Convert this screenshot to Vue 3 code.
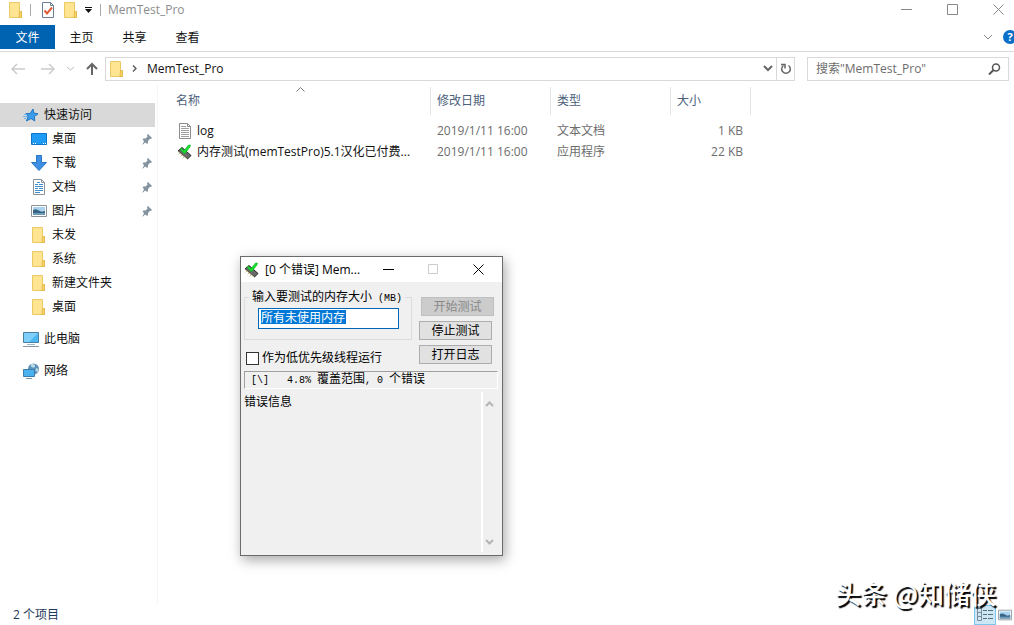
<script setup>
import { ref } from 'vue'

const search = ref('')
const memory = ref('所有未使用内存')
const lowPriority = ref(false)

const tabs = ['主页', '共享', '查看']
const places = [
  { name: '桌面', icon: 'desktop', pinned: true },
  { name: '下载', icon: 'download', pinned: true },
  { name: '文档', icon: 'document', pinned: true },
  { name: '图片', icon: 'picture', pinned: true },
  { name: '未发', icon: 'folder' },
  { name: '系统', icon: 'folder' },
  { name: '新建文件夹', icon: 'folder' },
  { name: '桌面', icon: 'folder' },
]
const files = [
  { name: 'log', icon: 'text', date: '2019/1/11 16:00', type: '文本文档', size: '1 KB' },
  { name: '内存测试(memTestPro)5.1汉化已付费...', icon: 'chip', date: '2019/1/11 16:00', type: '应用程序', size: '22 KB' },
]
</script>

<template>
  <div class="explorer">
    <svg class="defs" aria-hidden="true">
      <symbol id="folder" viewBox="0 0 16 16">
        <path d="M1.500.5h10v9l2 .5v5.500h-12z" fill="#ffe491" stroke="#ecc964" />
        <path d="M11.500 9.500h2v6h-2.500z" fill="#fbd566" stroke="#e2b84a" />
      </symbol>
      <symbol id="chip" viewBox="0 0 16 16">
        <path d="M1 7 5 3.500l9 8L10.500 15z" fill="#6a6a6a" stroke="#222" />
        <path d="M1 7.500l9 7.500M3 9l-1.500 1.500M5 11l-1.500 1.500M7 13l-1.500 1.500" stroke="#c9c29a" fill="none" />
        <path d="M4 4l3 2.500L11.500 1h2L13 3 8 9.500 6.500 9 3 5z" fill="#16e02e" stroke="#08a81a" stroke-width=".5" />
      </symbol>
      <symbol id="desktop" viewBox="0 0 16 16">
        <path d="M.5 2.500h15v11H.5z" fill="#1e9cf5" stroke="#0b74cc" />
        <path d="M2 12.500h1m1 0h1m7 0h1m1 0h1" stroke="#fff" />
      </symbol>
      <symbol id="download" viewBox="0 0 16 16">
        <path d="M5.500.5h5v7h5L8 15.500.5 7.500h5z" fill="#3c8fe2" stroke="#2876c6" />
      </symbol>
      <symbol id="document" viewBox="0 0 16 16">
        <path d="M2.500.5h8l3 3v12h-11z" fill="#fff" stroke="#8a9299" />
        <path d="M10.500.5v3h3" fill="none" stroke="#8a9299" />
        <path d="M6 3.500h3M4 5.500h3m1 0h4M4 7.500h8M4 9.500h3m1 0h4M4 11.500h8M4 13.500h5" stroke="#3f8dcc" />
      </symbol>
      <symbol id="picture" viewBox="0 0 16 16">
        <path d="M.5 2.500h15v11H.5z" fill="#fff" stroke="#8b9399" />
        <path d="M2 4h12v4H2z" fill="#a9d3f1" />
        <path d="M2 7c3-2 5 0 7 1s3 0 5 0v4H2z" fill="#3a6685" />
        <path d="M2 10h12v2H2z" fill="#6c9cba" />
      </symbol>
      <symbol id="text" viewBox="0 0 16 16">
        <path d="M2.500.5h8l3 3v12h-11z" fill="#fff" stroke="#8d8d8d" />
        <path d="M10.500.5v3h3" fill="none" stroke="#8d8d8d" />
        <path d="M4 3.500h5M4 5.500h8M4 7.500h8M4 9.500h8M4 11.500h8M4 13.500h8" stroke="#a0a0a0" />
      </symbol>
      <symbol id="star" viewBox="0 0 16 16">
        <path d="M10 2l.8 4 4.200.8-3.500 2.700.2 4.500-3.700-2.500L3.500 14l1.500-4.500-2-3 4 .2z" fill="#3c9cec" stroke="#2278c4" />
        <path d="M1 7.500h3M0 9.500h4M1 11.500h2" stroke="#6db3ee" />
      </symbol>
      <symbol id="pin" viewBox="0 0 12 12">
        <path d="M7 1l4 4-1 1-1-.2L7 8v2L6 11 1.500 6.500l1-1h2l2-2L6 2zM3.500 7.500 5 9 1 12z" fill="#8393a0" />
      </symbol>
      <symbol id="pc" viewBox="0 0 16 16">
        <path d="M.5 1.500h15v10H.5z" fill="#4db7f2" stroke="#4b7f9f" />
        <path d="M1 2h14L6 11H1z" fill="#7ed0fa" />
        <path d="M4 13.500h8" stroke="#9fb6c4" />
        <path d="M0 15.500h16" stroke="#8796a2" />
      </symbol>
      <symbol id="network" viewBox="0 0 16 16">
        <circle cx="10.500" cy="6" r="5.500" fill="#5c92b9" />
        <path d="M8 1.500c2-1 5 0 4 2s-3 1-4 0zM13 5l2.500 1-1 3-2-1z" fill="#b9dbe9" />
        <path d="M.5 6.500h11v7H.5z" fill="#4ab1ef" stroke="#3b7ca8" />
        <path d="M3 15.500h6" stroke="#7b93a4" />
      </symbol>
    </svg>

    <header class="titlebar">
      <svg class="i16"><use href="#folder" /></svg>
      <span class="divider"></span>
      <button class="plain check" aria-label="属性">
        <svg width="14" height="16" viewBox="0 0 14 16" fill="none">
          <path d="M1.500.5h8l3 3v12h-11z" fill="#fff" stroke="#6b7e93" />
          <path d="M9.500.5v3h3" stroke="#6b7e93" />
          <path d="M3.500 8.500l2.500 3 5-6" stroke="#df5b38" stroke-width="2" />
        </svg>
      </button>
      <button class="plain" aria-label="新建文件夹"><svg class="i16"><use href="#folder" /></svg></button>
      <button class="plain more" aria-label="自定义快速访问工具栏">
        <svg width="7" height="6"><path d="M0 .5h7" stroke="#111" /><path d="M0 2h7L3.500 6z" fill="#111" /></svg>
      </button>
      <span class="divider last"></span>
      <h1>MemTest_Pro</h1>
      <div class="window-buttons">
        <button class="plain" aria-label="最小化"><svg width="11" height="11"><path d="M0 5.500h11" stroke="#888" /></svg></button>
        <button class="plain" aria-label="最大化"><svg width="11" height="11"><path d="M.5.5h10v10H.5z" fill="none" stroke="#888" /></svg></button>
        <button class="plain" aria-label="关闭"><svg width="11" height="11"><path d="M.5.500l10 10m0-10l-10 10" stroke="#888" /></svg></button>
      </div>
    </header>

    <nav class="ribbon">
      <button class="plain tab active">文件</button>
      <button v-for="tab in tabs" :key="tab" class="plain tab">{{ tab }}</button>
      <button class="plain expand" aria-label="展开功能区">
        <svg width="10" height="6" fill="none"><path d="M1 1l4 4 4-4" stroke="#888" /></svg>
      </button>
      <button class="plain help" aria-label="帮助">?</button>
    </nav>

    <div class="addressbar">
      <button class="plain" aria-label="后退"><svg width="14" height="12" fill="none" stroke="#ccc" stroke-width="1.500"><path d="M14 6H1m5-5L1 6l5 5" /></svg></button>
      <button class="plain forward" aria-label="前进"><svg width="14" height="12" fill="none" stroke="#ccc" stroke-width="1.500"><path d="M0 6h13M8 1l5 5-5 5" /></svg></button>
      <button class="plain recent" aria-label="最近位置"><svg width="7" height="5" fill="none"><path d="M0 1l3.500 3L7 1" stroke="#bbb" /></svg></button>
      <button class="plain up" aria-label="向上"><svg width="12" height="13" fill="none" stroke="#666" stroke-width="2"><path d="M6 13V2M1 7l5-5 5 5" /></svg></button>
      <div class="path">
        <svg class="i16"><use href="#folder" /></svg>
        <svg class="crumb" width="5" height="7" fill="none"><path d="M1 .5l3 3-3 3" stroke="#555" stroke-width="1.300" /></svg>
        <button class="plain">MemTest_Pro</button>
        <button class="plain history" aria-label="以前的位置"><svg width="10" height="7" fill="none"><path d="M1 1l4 4 4-4" stroke="#666" stroke-width="2" /></svg></button>
        <button class="plain refresh" aria-label="刷新">
          <svg width="12" height="12" fill="none" stroke="#666" stroke-width="1.500"><path d="M3.500 2.500a4.300 4.300 0 1 0 5 0" /><path d="M1 1.500h4v4" /></svg>
        </button>
      </div>
      <div class="search">
        <input v-model="search" type="search" aria-label="搜索" placeholder='搜索"MemTest_Pro"' />
        <svg width="13" height="12" fill="none" stroke="#555" stroke-width="1.500"><circle cx="8" cy="4.500" r="3.500" /><path d="M5.500 7L1 11.500" stroke-width="2" /></svg>
      </div>
    </div>

    <div class="content">
      <aside class="sidebar">
        <a href="#" class="place root selected"><svg class="i16"><use href="#star" /></svg>快速访问</a>
        <a v-for="(place, i) in places" :key="i" href="#" class="place">
          <svg class="i16"><use :href="'#' + place.icon" /></svg>{{ place.name }}
          <svg v-if="place.pinned" class="pin"><use href="#pin" /></svg>
        </a>
        <a href="#" class="place root spaced"><svg class="i16"><use href="#pc" /></svg>此电脑</a>
        <a href="#" class="place root spaced"><svg class="i16"><use href="#network" /></svg>网络</a>
      </aside>

      <main>
        <table>
          <thead>
            <tr>
              <th class="c-name">名称<svg class="sort" width="9" height="5" fill="none"><path d="M.5 4.500l4-4 4 4" stroke="#777" /></svg></th>
              <th class="c-date">修改日期</th>
              <th class="c-type">类型</th>
              <th class="c-size">大小</th>
            </tr>
          </thead>
          <tbody>
            <tr v-for="file in files" :key="file.icon">
              <td>
                <div class="file"><svg class="i16"><use :href="'#' + file.icon" /></svg>{{ file.name }}</div>
              </td>
              <td>{{ file.date }}</td>
              <td>{{ file.type }}</td>
              <td class="size">{{ file.size }}</td>
            </tr>
          </tbody>
        </table>
      </main>
    </div>

    <footer>
      <span>2 个项目</span>
      <button class="plain view on" aria-label="详细信息">
        <svg width="16" height="14" fill="none"><path d="M.5.5h4v12h-4zM.5 4.500h4M.5 8.500h4" stroke="#7d8c98" /><path d="M6 2.500h4m1 0h5M6 6.500h4m1 0h5M6 10.500h4m1 0h5" stroke="#5c6c78" /></svg>
      </button>
      <button class="plain view" aria-label="大图标"><svg width="14" height="14" viewBox="0 0 16 16"><use href="#picture" /></svg></button>
    </footer>

    <section class="dialog" role="dialog" aria-label="MemTest">
      <div class="dialog-title">
        <svg class="i16"><use href="#chip" /></svg>
        <h2>[0 个错误] Mem...</h2>
        <button class="plain" aria-label="最小化"><svg width="11" height="11"><path d="M0 5.500h11" stroke="#000" /></svg></button>
        <button class="plain" aria-label="最大化" disabled><svg width="11" height="11"><path d="M.5.5h9v9h-9z" fill="none" stroke="#ccc" /></svg></button>
        <button class="plain" aria-label="关闭"><svg width="11" height="11"><path d="M.5.500l10 10m0-10l-10 10" stroke="#000" /></svg></button>
      </div>
      <div class="dialog-body">
        <div class="form">
          <div class="options">
            <fieldset>
              <legend><label for="memory">输入要测试的内存大小<span class="mono"> (MB)</span></label></legend>
              <input id="memory" v-model="memory" type="text" />
            </fieldset>
            <label class="priority"><input v-model="lowPriority" type="checkbox" />作为低优先级线程运行</label>
          </div>
          <div class="actions">
            <button class="start" disabled>开始测试</button>
            <button>停止测试</button>
            <button>打开日志</button>
          </div>
        </div>
        <output class="status"><span class="mono">[\]&nbsp;&nbsp; 4.8% </span>覆盖范围<span class="mono">, 0 </span>个错误</output>
        <div class="log">
          <span>错误信息</span>
          <div class="scroll">
            <svg width="9" height="6" fill="none"><path d="M1 5l3.500-3.500L8 5" stroke="#b5b5b5" stroke-width="2" /></svg>
            <svg width="9" height="6" fill="none"><path d="M1 1l3.500 3.500L8 1" stroke="#b5b5b5" stroke-width="2" /></svg>
          </div>
        </div>
      </div>
    </section>

    <div class="signature">头条 @知储侠</div>
  </div>
</template>

<style>
body { margin: 0; background: #fff; }
</style>

<style scoped>
* { box-sizing: border-box; }
.explorer {
  position: relative;
  display: flex;
  flex-direction: column;
  height: 100vh;
  overflow: hidden;
  font: 12px/16px "Open Sans", "Noto Sans CJK SC", sans-serif;
  color: #111;
  background: #fff;
}
.defs { position: absolute; width: 0; height: 0; }
svg { display: block; flex: none; }
.i16 { width: 16px; height: 16px; }
.mono { font: 10px/12px "Liberation Mono", monospace; white-space: pre; }
.plain { padding: 0; border: 0; background: none; color: inherit; font: inherit; display: flex; align-items: center; justify-content: center; }
h1, h2 { margin: 0; font-size: 12px; font-weight: 400; }

.titlebar { display: flex; align-items: center; height: 19px; padding-left: 8px; }
.divider { width: 1px; height: 12px; margin: 0 8px 0 6px; background: #aaa; }
.divider.last { margin-left: 8px; margin-right: 7px; }
.check { margin: 0 8px 0 2px; }
.more { margin-left: 6px; }
h1 { color: #8c8c8c; }
.window-buttons { display: flex; margin-left: auto; }
.window-buttons button { width: 46px; height: 19px; }
.window-buttons button:last-child { width: 32px; margin-left: 7px; }

.ribbon { display: flex; height: 33px; padding-top: 6px; border-bottom: 1px solid #dadbdc; }
.tab { width: 53px; height: 24px; padding-top: 1px; }
.tab.active { width: 55px; background: #0063b1; color: #fff; }
.expand { margin-left: auto; width: 20px; height: 24px; }
.help { width: 14px; height: 14px; margin: 5px -3px 0 5px; border-radius: 50%; background: #0b6fc9; color: #fff; font-size: 11px; font-weight: 700; }

.addressbar { display: flex; align-items: center; height: 33px; padding: 0 5px 0 11px; }
.forward { margin-left: 16px; }
.recent { margin-left: 12px; }
.up { margin: 0 7px 0 12px; }
.path { flex: 1; display: flex; align-items: center; height: 24px; padding-left: 3px; border: 1px solid #d9d9d9; }
.crumb { margin: 0 10px 0 7px; }
.history { margin-left: auto; width: 16px; height: 22px; }
.refresh { width: 18px; height: 22px; border-left: 1px solid #d9d9d9; }
.search { display: flex; align-items: center; width: 202px; height: 24px; margin-left: 12px; padding: 0 7px 0 8px; border: 1px solid #d9d9d9; }
.search input { flex: 1; min-width: 0; padding: 0; border: 0; outline: 0; background: none; font: inherit; }
.search input::placeholder { color: #6d6d6d; opacity: 1; }

.content { flex: 1; display: flex; min-height: 0; }
.sidebar { width: 158px; padding: 18px 2px 0 0; border-right: 1px solid #f5f5f5; }
.place { display: flex; align-items: center; gap: 5px; height: 24px; padding: 0 2px 0 31px; color: #111; text-decoration: none; }
.place.root { padding-left: 23px; }
.place.selected { background: #d9d9d9; }
.place.spaced { margin-top: 8px; }
.pin { width: 12px; height: 12px; margin-left: auto; }

main { flex: 1; }
table { width: 593px; border-collapse: collapse; table-layout: fixed; }
th { height: 35px; padding: 0 0 4px 6px; text-align: left; font-weight: 400; color: #4c607a; background: linear-gradient(#e5e5e5, #e5e5e5) right 2px / 1px 28px no-repeat; }
th.c-name { position: relative; width: 273px; padding-left: 18px; }
.sort { position: absolute; left: 138px; top: 2px; }
.c-date, .c-type { width: 120px; }
.c-size { width: 80px; }
td { height: 21px; padding: 0 0 0 6px; color: #6d6d6d; white-space: nowrap; }
td:first-child { padding-left: 19px; color: #111; }
td.size { padding-right: 8px; text-align: right; }
.file { display: flex; align-items: center; gap: 4px; }

footer { display: flex; align-items: center; height: 21px; padding: 1px 0 0 13px; color: #1e395b; }
.view { width: 18px; height: 20px; }
.view.on { width: 22px; margin-left: auto; border: 1px solid #7cc4ec; background: #cce8f6; }

.dialog {
  position: absolute;
  left: 240px;
  top: 256px;
  display: flex;
  flex-direction: column;
  width: 263px;
  height: 300px;
  border: 1px solid #6b6b6b;
  background: #f0f0f0;
  box-shadow: 2px 4px 12px rgba(0, 0, 0, .35);
  color: #000;
}
.dialog-title { display: flex; align-items: center; height: 25px; padding: 0 1px 0 3px; background: #fff; }
.dialog-title h2 { flex: 1; margin-left: 5px; white-space: nowrap; }
.dialog-title button { width: 45px; height: 25px; }
.dialog-body { flex: 1; display: flex; flex-direction: column; padding: 8px 4px 3px 3px; line-height: 12px; }
.form { display: flex; gap: 7px; }
.options { flex: none; width: 168px; }
fieldset { min-width: 0; height: 50px; margin: 0; padding: 5px 12px 0 13px; border: 1px solid #dcdcdc; }
legend { margin-left: -9px; padding: 0 3px; white-space: nowrap; line-height: 14px; }
fieldset input {
  display: block;
  width: 141px;
  height: 21px;
  margin-top: -2px;
  padding: 0 2px 3px;
  border: 1px solid #0067b8;
  outline: 0;
  color: #fff;
  font: inherit;
  background: linear-gradient(#0078d7, #0078d7) 2px 1px / 85px 14px no-repeat #fff;
}
.priority { display: flex; align-items: center; gap: 3px; height: 14px; margin: 11px 0 0 2px; white-space: nowrap; }
.priority input { appearance: none; width: 13px; height: 13px; margin: 0; border: 1px solid #333; background: #fff; }
.actions { display: flex; flex-direction: column; gap: 5px; padding-top: 7px; }
.actions button { width: 73px; height: 19px; padding: 0; border: 1px solid #adadad; background: #e1e1e1; color: #000; font: inherit; line-height: 12px; }
.actions .start { margin-left: 2px; border-color: #bfbfbf; background: #ccc; color: #888; }
.status { display: block; height: 18px; margin-top: 6px; padding: 0 6px; border: 1px solid; border-color: #a0a0a0 #fff #fff #a0a0a0; line-height: 14px; white-space: nowrap; }
.log { flex: 1; display: flex; justify-content: space-between; margin-top: 3px; }
.log > span { margin-top: 4px; }
.scroll { display: flex; flex-direction: column; justify-content: space-between; width: 17px; padding: 9px 0 7px 2px; border-left: 2px solid #fff; }

.signature {
  position: absolute;
  right: 18px;
  bottom: 14px;
  color: #fff;
  font: 500 26px/36px "Noto Sans CJK SC", sans-serif;
  text-shadow: 2px 2px 1px #000;
  white-space: nowrap;
  pointer-events: none;
}
</style>
